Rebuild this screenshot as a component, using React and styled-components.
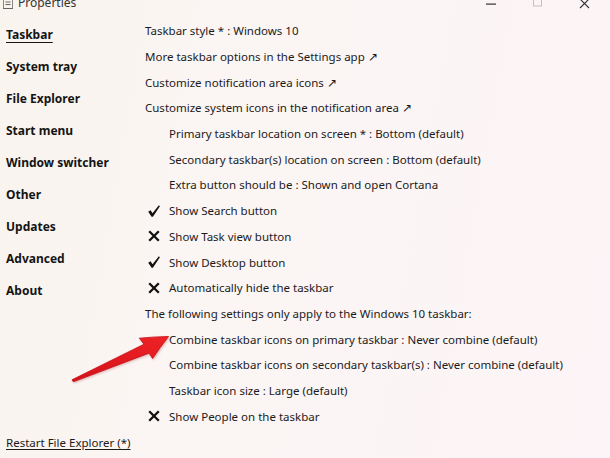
import React from "react";
import styled, { createGlobalStyle } from "styled-components";

const GlobalStyle = createGlobalStyle`
  html, body {
    margin: 0;
    padding: 0;
    background: #fbf5f4;
  }
  * { box-sizing: border-box; }
`;

const sections = [
  "Taskbar",
  "System tray",
  "File Explorer",
  "Start menu",
  "Window switcher",
  "Other",
  "Updates",
  "Advanced",
  "About",
];

const options = [
  { text: "Taskbar style * : Windows 10" },
  { text: "More taskbar options in the Settings app \u2197" },
  { text: "Customize notification area icons \u2197" },
  { text: "Customize system icons in the notification area \u2197" },
  { text: "Primary taskbar location on screen * : Bottom (default)", indent: true },
  { text: "Secondary taskbar(s) location on screen : Bottom (default)", indent: true },
  { text: "Extra button should be : Shown and open Cortana", indent: true },
  { text: "Show Search button", mark: "check" },
  { text: "Show Task view button", mark: "cross" },
  { text: "Show Desktop button", mark: "check" },
  { text: "Automatically hide the taskbar", mark: "cross" },
  { text: "The following settings only apply to the Windows 10 taskbar:" },
  { text: "Combine taskbar icons on primary taskbar : Never combine (default)", indent: true },
  { text: "Combine taskbar icons on secondary taskbar(s) : Never combine (default)", indent: true },
  { text: "Taskbar icon size : Large (default)", indent: true },
  { text: "Show People on the taskbar", mark: "cross" },
];

function Mark({ type }) {
  if (type === "check") {
    return (
      <MarkBox>
        <svg width="14" height="14" viewBox="0 0 14 14">
          <path d="M1.2 7.8 L3.6 6.3 L5.5 9.3 L11.9 1.3 L12.9 2.2 L5.9 12.8 L4.6 12.8 Z" fill="#111" />
        </svg>
      </MarkBox>
    );
  }
  if (type === "cross") {
    return (
      <MarkBox>
        <svg width="14" height="14" viewBox="0 0 14 14">
          <path d="M2.2 2.2 L11.8 11.8 M11.8 2.2 L2.2 11.8" stroke="#111" strokeWidth="2.3" />
        </svg>
      </MarkBox>
    );
  }
  return null;
}

function App() {
  return (
    <>
      <GlobalStyle />
      <Window>
        <TitleBar>
          <TitleLeft>
            <AppIcon>
              <svg width="10" height="10" viewBox="0 0 10 10">
                <rect x="0.5" y="0.5" width="9" height="9" fill="none" stroke="#888" strokeWidth="1" />
                <path d="M2.5 3 H7.5 M2.5 5.5 H7.5 M0 9.5 H10" stroke="#666" strokeWidth="1" />
              </svg>
            </AppIcon>
            <TitleText>Properties</TitleText>
          </TitleLeft>
          <Controls>
            <CtrlButton>
              <svg width="10" height="10" viewBox="0 0 10 10">
                <rect x="0" y="3.5" width="10" height="1.2" fill="#333" />
              </svg>
            </CtrlButton>
            <CtrlButton>
              <svg width="10" height="10" viewBox="0 0 10 10">
                <rect x="0.5" y="-3" width="8" height="9" fill="none" stroke="#c4c0c0" strokeWidth="1" />
              </svg>
            </CtrlButton>
            <CtrlButton>
              <svg width="12" height="10" viewBox="0 0 12 10">
                <path d="M1 -1 L10 8 M10 -1 L1 8" stroke="#333" strokeWidth="1.1" />
              </svg>
            </CtrlButton>
          </Controls>
        </TitleBar>
        <Body>
          <Sidebar>
            <NavList>
              {sections.map((s, i) => (
                <NavItem key={s} $active={i === 0}>
                  {s}
                </NavItem>
              ))}
            </NavList>
            <RestartLink>Restart File Explorer (*)</RestartLink>
          </Sidebar>
          <Content>
            {options.map((o) => (
              <OptionRow key={o.text} $indent={o.indent || !!o.mark}>
                {o.mark && <Mark type={o.mark} />}
                {o.text}
              </OptionRow>
            ))}
          </Content>
        </Body>
        <Arrow width="610" height="458" viewBox="0 0 610 458">
          <defs>
            <linearGradient id="arrowFill" x1="0" y1="1" x2="1" y2="0">
              <stop offset="0" stopColor="#d4121a" />
              <stop offset="1" stopColor="#ee2226" />
            </linearGradient>
          </defs>
          <path
            d="M72 379.8 L144 344.2 Q141.5 341 139.3 338.2 Q154 336.8 168.6 336.4 Q160 347.5 152.6 358.6 Q150.8 355.8 149 353.2 L73.4 381.8 Z"
            fill="url(#arrowFill)"
            stroke="#c50f16"
            strokeWidth="0.8"
            strokeLinejoin="round"
          />
        </Arrow>
      </Window>
    </>
  );
}

const Window = styled.div`
  position: relative;
  width: 610px;
  height: 458px;
  overflow: hidden;
  background: linear-gradient(100deg, #faf4ef 0%, #fbf5f4 40%, #fcf4f6 100%);
  font-family: "Noto Sans", "Open Sans", sans-serif;
  color: #1b1b1b;
  display: flex;
  flex-direction: column;
`;

const TitleBar = styled.div`
  height: 12px;
  display: flex;
  justify-content: space-between;
  align-items: flex-start;
  overflow: hidden;
`;

const TitleLeft = styled.div`
  display: flex;
  align-items: flex-start;
  margin-top: -5px;
  padding-left: 3px;
  gap: 5px;
`;

const AppIcon = styled.span`
  display: flex;
  margin-top: 4px;
`;

const TitleText = styled.span`
  font-size: 12px;
  line-height: 16px;
  color: #333;
`;

const Controls = styled.div`
  display: flex;
  padding-right: 2px;
`;

const CtrlButton = styled.span`
  width: 47px;
  height: 10px;
  display: flex;
  justify-content: center;
`;

const Body = styled.div`
  flex: 1;
  display: grid;
  grid-template-columns: 145px 1fr;
`;

const Sidebar = styled.div`
  display: flex;
  flex-direction: column;
  padding: 7px 0 8px 6px;
`;

const NavList = styled.div`
  display: flex;
  flex-direction: column;
`;

const NavItem = styled.div`
  height: 32px;
  line-height: 32px;
  font-size: 12px;
  font-weight: 700;
  color: #141414;
  text-decoration: ${(p) => (p.$active ? "underline" : "none")};
  text-underline-offset: 3px;
`;

const RestartLink = styled.div`
  margin-top: auto;
  font-size: 11.5px;
  text-decoration: underline;
  text-underline-offset: 2px;
  color: #1b1b1b;
`;

const Content = styled.div`
  display: flex;
  flex-direction: column;
  padding-top: 6px;
`;

const OptionRow = styled.div`
  height: 25.7px;
  display: flex;
  align-items: center;
  font-size: 11.5px;
  white-space: nowrap;
  padding-left: ${(p) => (p.$indent ? "24px" : "0")};
  position: relative;
`;

const MarkBox = styled.span`
  position: absolute;
  left: 2px;
  top: 50%;
  transform: translateY(-50%);
  display: flex;
`;

const Arrow = styled.svg`
  position: absolute;
  left: 0;
  top: 0;
  pointer-events: none;
  filter: drop-shadow(1px 1.5px 1px rgba(120, 0, 0, 0.25));
`;

export default App;
